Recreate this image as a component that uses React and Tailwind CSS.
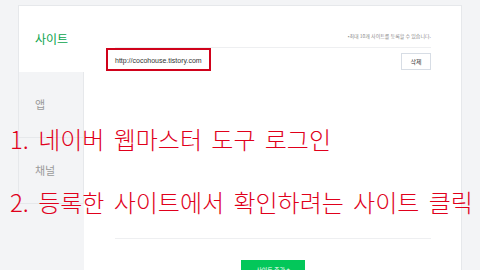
import React from 'react';

const tabs = [
  { label: '앱' },
  { label: '채널' },
];

export default function App() {
  return (
    <div
      className="relative w-[480px] h-[270px] overflow-hidden bg-[#f3f4f6]"
      style={{ fontFamily: '"Noto Sans CJK KR", "Noto Sans", sans-serif' }}
    >
      <div className="flex h-[279px] w-[444px] ml-[18px] mt-[5px]">
        {/* Tabs */}
        <div className="flex flex-col w-[66px]">
          <div className="h-[67px] bg-white border-l border-t border-[#e6e8eb] flex items-center pl-[16px] text-[12px] text-[#0aa44c]">
            사이트
          </div>
          {tabs.map((tab) => (
            <div
              key={tab.label}
              className="h-[66px] border-l border-b border-r border-[#e6e8eb] flex items-center pl-[16px] text-[11px] text-[#9a9a9a]"
            >
              {tab.label}
            </div>
          ))}
        </div>

        {/* Main panel */}
        <div className="flex-1 flex flex-col bg-white border-t border-r border-[#e6e8eb] pl-[31px] pr-[30px]">
          <div className="h-[42px] pt-[26px] border-b border-[#eeeff1] text-right text-[5px] leading-[8px] text-[#8a8a8a]">
            •최대 10개 사이트를 등록할 수 있습니다.
          </div>
          <div className="flex items-center justify-between pt-[5px]">
            <span
              className="text-[7px] text-[#333]"
              style={{ fontFamily: '"Liberation Sans", Arial, sans-serif' }}
            >
              http://cocohouse.tistory.com
            </span>
            <button className="w-[30px] h-[17px] border border-[#d7dde5] bg-white text-[6px] text-[#333] flex items-center justify-center">
              삭제
            </button>
          </div>
          <div className="flex-1 border-b border-[#eeeff1]" />
          <div className="h-[21px]" />
          <div className="self-center w-[64px] h-[24px] bg-[#03c75a] flex justify-center pt-[6px] text-[6px] text-white leading-[8px]">
            사이트 추가 +
          </div>
        </div>
      </div>

      {/* Annotation box */}
      <div className="absolute left-[106px] top-[48px] w-[105px] h-[23px] border-2 border-[#d0021b]" />

      {/* Annotation text */}
      <div className="absolute left-[10px] top-[124px] text-[24px] leading-[30px] font-light text-[#e0001b] [word-spacing:4px]">
        <div>1. 네이버 웹마스터 도구 로그인</div>
        <div className="mt-[33px]">2. 등록한 사이트에서 확인하려는 사이트 클릭</div>
      </div>
    </div>
  );
}
